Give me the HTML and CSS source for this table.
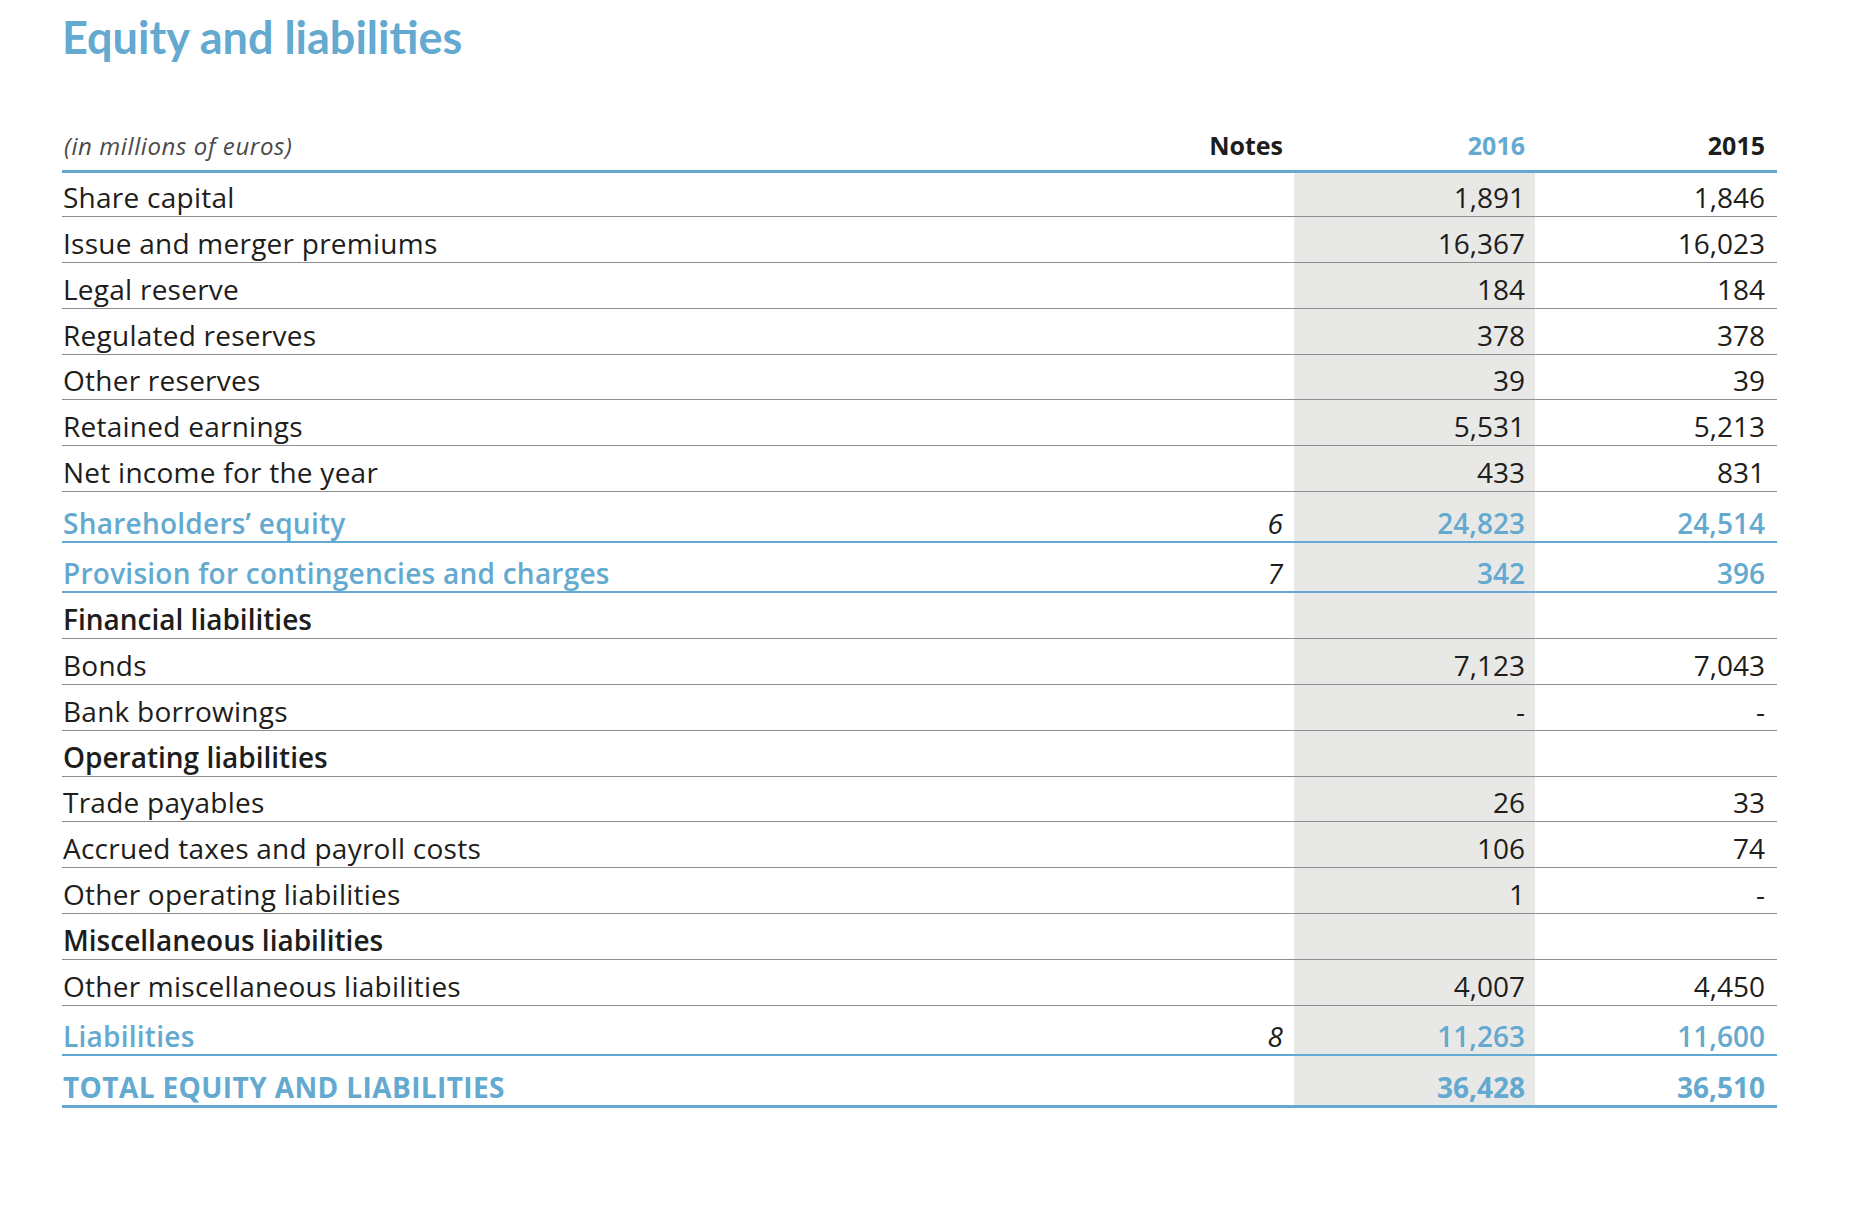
FILE: index.html
```html
<!DOCTYPE html>
<html lang="en">
<head>
<meta charset="utf-8">
<title>Equity and liabilities</title>
<link rel="stylesheet" href="styles.css">
</head>
<body>
<div class="page">
  <h1 class="title">Equity and liabilities</h1>
  <table class="bs">
    <colgroup>
      <col class="c-label">
      <col class="c-note">
      <col class="c-cur">
      <col class="c-prev">
    </colgroup>
    <thead>
      <tr>
        <th class="unit">(in millions of euros)</th>
        <th class="hnote">Notes</th>
        <th class="hcur">2016</th>
        <th class="hprev">2015</th>
      </tr>
    </thead>
    <tbody>
      <tr class="first"><td class="lbl">Share capital</td><td class="note"></td><td class="cur">1,891</td><td class="prev">1,846</td></tr>
      <tr><td class="lbl">Issue and merger premiums</td><td class="note"></td><td class="cur">16,367</td><td class="prev">16,023</td></tr>
      <tr><td class="lbl">Legal reserve</td><td class="note"></td><td class="cur">184</td><td class="prev">184</td></tr>
      <tr><td class="lbl">Regulated reserves</td><td class="note"></td><td class="cur">378</td><td class="prev">378</td></tr>
      <tr><td class="lbl">Other reserves</td><td class="note"></td><td class="cur">39</td><td class="prev">39</td></tr>
      <tr><td class="lbl">Retained earnings</td><td class="note"></td><td class="cur">5,531</td><td class="prev">5,213</td></tr>
      <tr><td class="lbl">Net income for the year</td><td class="note"></td><td class="cur">433</td><td class="prev">831</td></tr>
      <tr class="sum"><td class="lbl">Shareholders’ equity</td><td class="note">6</td><td class="cur">24,823</td><td class="prev">24,514</td></tr>
      <tr class="sum"><td class="lbl">Provision for contingencies and charges</td><td class="note">7</td><td class="cur">342</td><td class="prev">396</td></tr>
      <tr class="section"><td class="lbl">Financial liabilities</td><td class="note"></td><td class="cur"></td><td class="prev"></td></tr>
      <tr><td class="lbl">Bonds</td><td class="note"></td><td class="cur">7,123</td><td class="prev">7,043</td></tr>
      <tr><td class="lbl">Bank borrowings</td><td class="note"></td><td class="cur">-</td><td class="prev">-</td></tr>
      <tr class="section"><td class="lbl">Operating liabilities</td><td class="note"></td><td class="cur"></td><td class="prev"></td></tr>
      <tr><td class="lbl">Trade payables</td><td class="note"></td><td class="cur">26</td><td class="prev">33</td></tr>
      <tr><td class="lbl">Accrued taxes and payroll costs</td><td class="note"></td><td class="cur">106</td><td class="prev">74</td></tr>
      <tr><td class="lbl">Other operating liabilities</td><td class="note"></td><td class="cur">1</td><td class="prev">-</td></tr>
      <tr class="section"><td class="lbl">Miscellaneous liabilities</td><td class="note"></td><td class="cur"></td><td class="prev"></td></tr>
      <tr><td class="lbl">Other miscellaneous liabilities</td><td class="note"></td><td class="cur">4,007</td><td class="prev">4,450</td></tr>
      <tr class="sum"><td class="lbl">Liabilities</td><td class="note">8</td><td class="cur">11,263</td><td class="prev">11,600</td></tr>
      <tr class="sum total"><td class="lbl">TOTAL EQUITY AND LIABILITIES</td><td class="note"></td><td class="cur">36,428</td><td class="prev">36,510</td></tr>
    </tbody>
  </table>
</div>
</body>
</html>
```

FILE: styles.css
```css
html, body {
  margin: 0;
  padding: 0;
  background: #ffffff;
}

body {
  font-family: "Open Sans", "Liberation Sans", sans-serif;
  color: #1d1d1b;
}

.page {
  padding: 0 81px 0 62px;
}

.title {
  margin: 0;
  padding-top: 11px;
  font-family: Lato, "Open Sans", sans-serif;
  font-weight: 700;
  font-size: 45px;
  line-height: 52px;
  color: #63a9d0;
}

.bs {
  margin-top: 67px;
  width: 1715px;
  table-layout: fixed;
  border-collapse: separate;
  border-spacing: 0;
}

.c-label { width: 1082px; }
.c-note { width: 150px; }
.c-cur { width: 241px; }
.c-prev { width: 242px; }

.bs th {
  padding: 0 0 9px 0;
  font-size: 25px;
  line-height: 30px;
  font-weight: 700;
  text-align: right;
  vertical-align: baseline;
  border-bottom: 3px solid #63a9d0;
  color: #1d1d1b;
}

.bs th.unit {
  text-align: left;
  padding-left: 2px;
  font-size: 24px;
  letter-spacing: 0.6px;
  font-weight: 400;
  font-style: italic;
  color: #4a4a4a;
}

.bs th.hnote { padding-right: 11px; }
.bs th.hcur { padding-right: 10px; color: #63a9d0; }
.bs th.hprev { padding-right: 12px; }

.bs td {
  padding: 8.85px 0 2px 0;
  font-size: 28px;
  line-height: 34px;
  vertical-align: baseline;
  border-bottom: 1px solid #8e8e8e;
  white-space: nowrap;
}

.bs tr.first td { padding-top: 7px; }

.bs td.lbl {
  text-align: left;
  padding-left: 1px;
  letter-spacing: 0.25px;
}

.bs td.note {
  text-align: right;
  padding-right: 11px;
  font-style: italic;
  color: #1d1d1b;
}

.bs td.cur {
  text-align: right;
  padding-right: 10px;
  background: #e8e8e7;
}

.bs td.prev {
  text-align: right;
  padding-right: 12px;
}

.bs tr.section td.lbl {
  font-weight: 600;
  letter-spacing: 0;
}

.bs tr.sum td {
  padding-top: 13.6px;
  padding-bottom: 1px;
  border-bottom: 2px solid #63a9d0;
  color: #63a9d0;
  font-weight: 600;
}

.bs tr.sum td.lbl {
  letter-spacing: 0.25px;
}

.bs tr.sum td.note {
  color: #1d1d1b;
  font-weight: 400;
}

.bs tr.total td {
  border-bottom-width: 3px;
  font-weight: 700;
}

.bs tr.total td.lbl {
  letter-spacing: 0.4px;
}

.bs tr.total td.note {
  font-weight: 400;
}
```
